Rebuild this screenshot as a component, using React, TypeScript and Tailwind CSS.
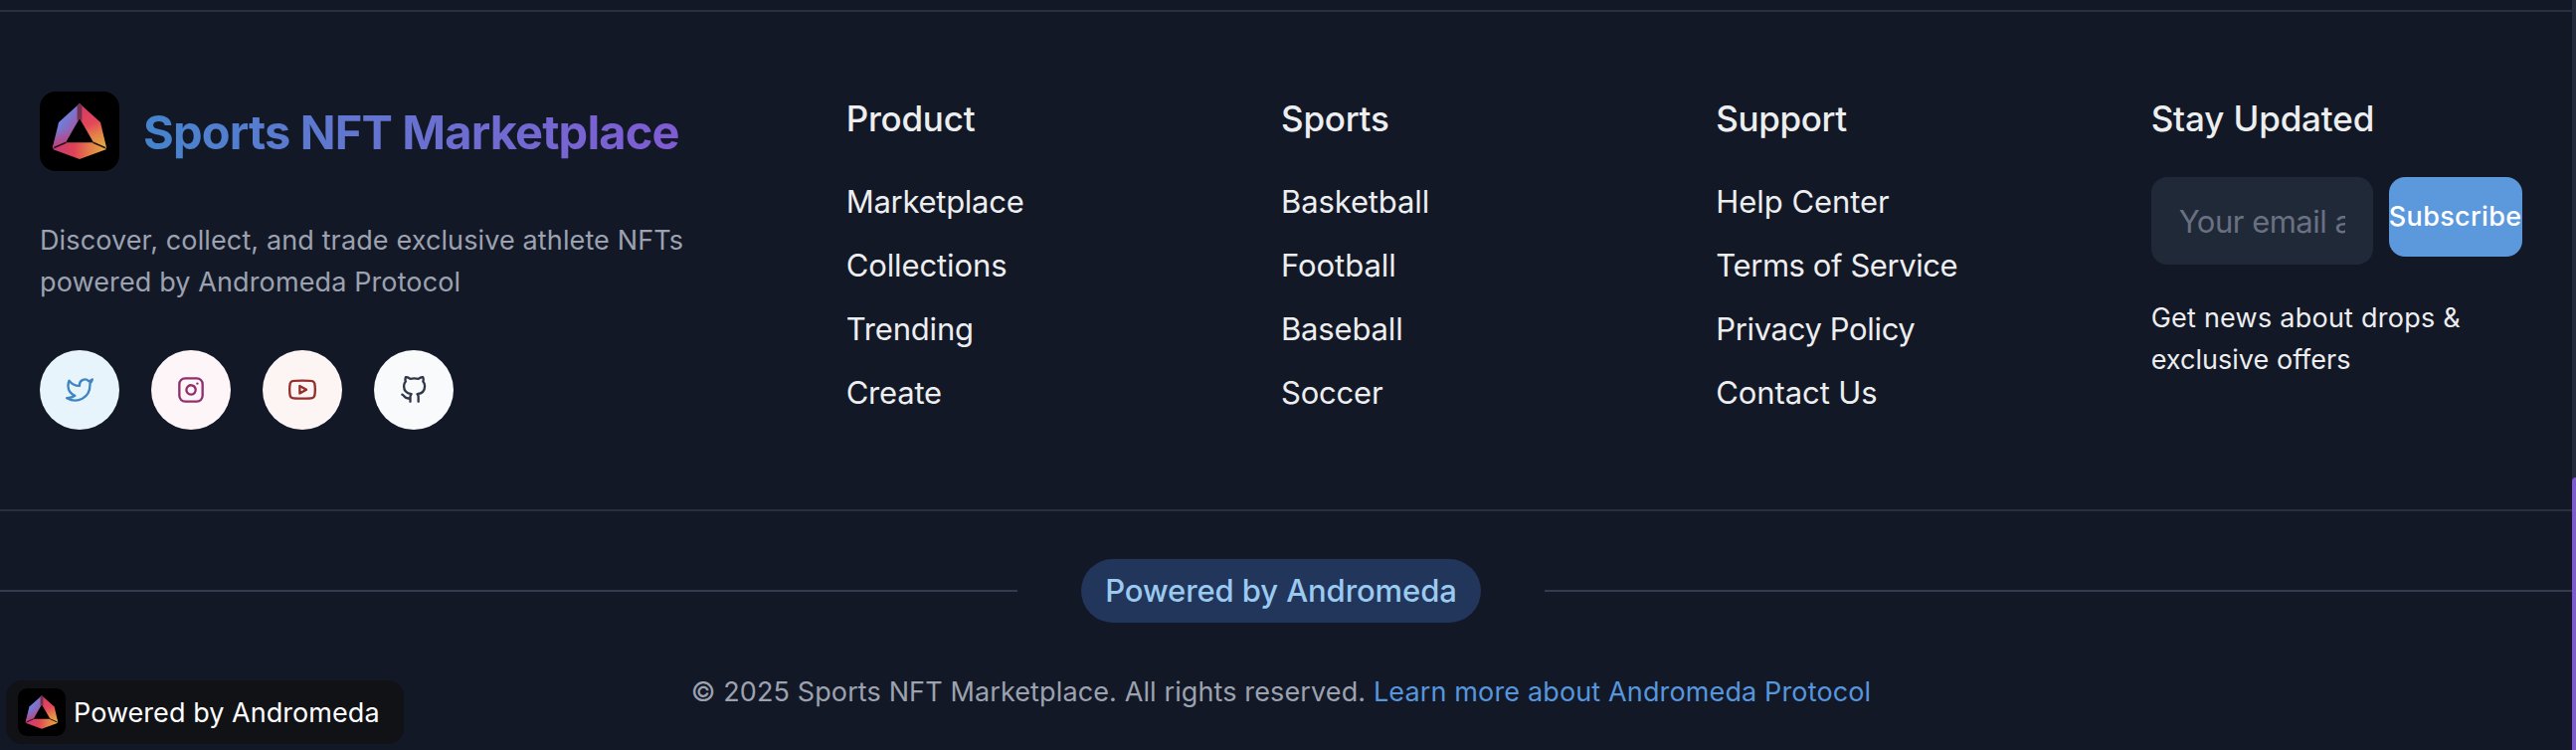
import { FiGithub, FiInstagram, FiTwitter, FiYoutube } from "react-icons/fi";

type LinkItem = { label: string; tracking: string };
type Column = { title: string; tracking: string; links: LinkItem[] };

const columns: Column[] = [
  {
    title: "Product",
    tracking: "tracking-[-0.23px]",
    links: [
      { label: "Marketplace", tracking: "tracking-[-0.27px]" },
      { label: "Collections", tracking: "tracking-[-0.11px]" },
      { label: "Trending", tracking: "tracking-[-0.17px]" },
      { label: "Create", tracking: "tracking-[-0.2px]" },
    ],
  },
  {
    title: "Sports",
    tracking: "tracking-[-0.23px]",
    links: [
      { label: "Basketball", tracking: "tracking-[-0.12px]" },
      { label: "Football", tracking: "tracking-[-0.05px]" },
      { label: "Baseball", tracking: "tracking-[-0.16px]" },
      { label: "Soccer", tracking: "tracking-[-0.2px]" },
    ],
  },
  {
    title: "Support",
    tracking: "tracking-[-0.4px]",
    links: [
      { label: "Help Center", tracking: "tracking-[-0.05px]" },
      { label: "Terms of Service", tracking: "tracking-[-0.42px]" },
      { label: "Privacy Policy", tracking: "tracking-[-0.36px]" },
      { label: "Contact Us", tracking: "tracking-[-0.1px]" },
    ],
  },
];

const socials = [
  { name: "Twitter", Icon: FiTwitter, style: "bg-[#e8f4fc] text-[#3f84c3]" },
  { name: "Instagram", Icon: FiInstagram, style: "bg-[#fef5f8] text-[#8f306c]" },
  { name: "YouTube", Icon: FiYoutube, style: "bg-[#fdf5f4] text-[#942f2b]" },
  { name: "GitHub", Icon: FiGithub, style: "bg-[#f8fafc] text-[#303749]" },
];

function Logo({ id, className }: { id: string; className: string }) {
  return (
    <svg viewBox="0 0 80 80" className={className} aria-hidden="true">
      <defs>
        <linearGradient id={`${id}-l`} gradientUnits="userSpaceOnUse" x1="20" y1="30" x2="36" y2="41">
          <stop offset="0" stopColor="#6c82de" />
          <stop offset="0.4" stopColor="#8070c8" />
          <stop offset="1" stopColor="#a8549a" />
        </linearGradient>
        <linearGradient id={`${id}-m`} gradientUnits="userSpaceOnUse" x1="0" y1="38" x2="0" y2="57">
          <stop offset="0" stopColor="#c04078" stopOpacity="0" />
          <stop offset="1" stopColor="#c04078" />
        </linearGradient>
        <linearGradient id={`${id}-r`} gradientUnits="userSpaceOnUse" x1="46" y1="16" x2="64" y2="56">
          <stop offset="0" stopColor="#d83c62" />
          <stop offset="0.4" stopColor="#e4485a" />
          <stop offset="0.68" stopColor="#e48248" />
          <stop offset="1" stopColor="#dcb040" />
        </linearGradient>
        <linearGradient id={`${id}-b`} gradientUnits="userSpaceOnUse" x1="13" y1="56" x2="67" y2="60">
          <stop offset="0" stopColor="#c23c78" />
          <stop offset="0.4" stopColor="#de4256" />
          <stop offset="0.66" stopColor="#e4784a" />
          <stop offset="1" stopColor="#e2ac42" />
        </linearGradient>
      </defs>
      <rect width="80" height="80" rx="16" fill="#000" />
      <path d="M40 12 19 31 12.8 57 26 51.3 40 27Z" fill={`url(#${id}-l)`} />
      <path d="M40 12 19 31 12.8 57 26 51.3 40 27Z" fill={`url(#${id}-m)`} />
      <path d="M40 12 61 31 67.2 57 54 51.3 40 27Z" fill={`url(#${id}-r)`} />
      <path d="M26 51.3H54L67.2 58 40 68 12.8 58Z" fill={`url(#${id}-b)`} />
      <path d="M37.6 14.2 40 12 42.4 14.2V29.5L40 27 37.6 29.5Z" fill="#74304f" />
      <path d="M14.5 56.4 26.5 51.2M65.5 56.4 53.5 51.2" stroke="#2c0d18" strokeWidth="1.5" />
    </svg>
  );
}

function LinkColumn({ title, tracking, links }: Column) {
  return (
    <div className="flex flex-col">
      <h3 className={`text-[35px] leading-[54px] font-medium ${tracking}`}>{title}</h3>
      <ul className="mt-[33px] flex flex-col gap-4">
        {links.map((link) => (
          <li key={link.label} className={`text-[31px] leading-[48px] ${link.tracking}`}>
            <a href="#">{link.label}</a>
          </li>
        ))}
      </ul>
    </div>
  );
}

export default function App() {
  return (
    <div className="relative flex h-[754px] w-[2590px] overflow-hidden bg-[#131827] font-[Inter,sans-serif] text-[#edeeef]">
      <footer className="mt-2.5 w-[2586px] border-t-2 border-[#292f3e]">
        <div className="grid h-[500px] w-[2576px] grid-cols-[2fr_1fr_1fr_1fr_1fr] gap-16 px-10 py-20">
          <div className="flex flex-col">
            <div className="flex items-center gap-6">
              <Logo id="brand" className="size-20" />
              <span className="bg-linear-to-r from-[#4484cd] to-[#7f5bd3] bg-clip-text pt-0.5 text-[47px] leading-[58px] font-bold tracking-[-0.84px] whitespace-nowrap text-transparent">
                Sports NFT Marketplace
              </span>
            </div>
            <p className="mt-[49px] text-[27px] leading-[42px] tracking-[0.12px] text-[#9ca2af]">
              Discover, collect, and trade exclusive athlete NFTs
              <br />
              powered by Andromeda Protocol
            </p>
            <div className="mt-[47px] flex gap-8">
              {socials.map(({ name, Icon, style }) => (
                <a
                  key={name}
                  href="#"
                  aria-label={name}
                  className={`flex size-20 items-center justify-center rounded-full ${style}`}
                >
                  <Icon className="size-7" />
                </a>
              ))}
            </div>
          </div>

          {columns.map((column) => (
            <LinkColumn key={column.title} {...column} />
          ))}

          <div className="flex min-w-0 flex-col">
            <h3 className="text-[35px] leading-[54px] font-medium tracking-[-0.15px]">Stay Updated</h3>
            <div className="mt-8 flex items-start gap-4">
              <input
                placeholder="Your email address"
                className="h-22 w-[223px] rounded-2xl bg-[#202937] px-7 text-[31px] tracking-[-0.5px] placeholder:text-[#697082]"
              />
              <button className="flex h-20 w-[134px] items-center justify-center rounded-2xl bg-[#5b98dc] text-[27px] font-medium tracking-[0.33px] whitespace-nowrap text-white">
                Subscribe
              </button>
            </div>
            <p className="mt-[33px] text-[27px] leading-[42px] tracking-[0.24px]">
              Get news about drops &amp;
              <br />
              <span className="tracking-[0.03px]">exclusive offers</span>
            </p>
          </div>
        </div>

        <div className="border-t-2 border-[#292f3e] pt-12">
          <div className="flex items-center">
            <div className="h-0.5 w-[1023px] bg-[#343b4f]" />
            <div className="mx-16 flex h-16 w-[402px] items-center justify-center rounded-full bg-[#22355b] text-[31px] font-medium tracking-[-0.1px] whitespace-nowrap text-[#9acaef]">
              Powered by Andromeda
            </div>
            <div className="h-0.5 flex-1 bg-[#343b4f]" />
          </div>
          <p className="mt-[49px] w-[2576px] text-center text-[27px] leading-[42px] tracking-[0.12px] text-[#9ca2af]">
            © 2025 Sports NFT Marketplace. All rights reserved.{" "}
            <a href="#" className="tracking-[0.14px] text-[#5696dd]">
              Learn more about Andromeda Protocol
            </a>
          </p>
        </div>
      </footer>

      <div className="flex h-full w-1 flex-col bg-[#242b3a] pt-[480px]">
        <div className="flex-1 rounded-tl-full bg-[#7f5bd0]" />
      </div>

      <div className="absolute top-[684px] left-1.5 flex h-16 w-[400px] items-center gap-2.5 rounded-2xl bg-[#111216] pl-3">
        <Logo id="badge" className="size-12" />
        <span className="-ml-0.5 pt-px text-[27px] leading-[42px] tracking-[0.05px] whitespace-nowrap text-white">
          Powered by Andromeda
        </span>
      </div>
    </div>
  );
}
